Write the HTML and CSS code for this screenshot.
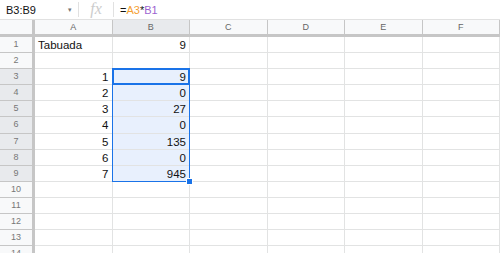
FILE: index.html
```html
<!DOCTYPE html>
<html lang="pt">
<head>
    <meta charset="UTF-8">
    <title>Tabuada - Planilha</title>
    <link rel="stylesheet" href="styles.css">
</head>
<body>

<div class="formula-bar">
    <div class="name-box">B3:B9 <span class="caret">▾</span></div>
    <div class="fx">fx</div>
    <div class="formula">=<span class="ref-a">A3</span>*<span class="ref-b">B1</span></div>
</div>

<div class="sheet">
    <div class="corner"></div>
    <div class="col-head">A</div>
    <div class="col-head selected">B</div>
    <div class="col-head">C</div>
    <div class="col-head">D</div>
    <div class="col-head">E</div>
    <div class="col-head">F</div>

    <div class="row-head">1</div>
    <div class="cell">Tabuada</div><div class="cell num">9</div><div class="cell"></div><div class="cell"></div><div class="cell"></div><div class="cell"></div>

    <div class="row-head">2</div>
    <div class="cell"></div><div class="cell"></div><div class="cell"></div><div class="cell"></div><div class="cell"></div><div class="cell"></div>

    <div class="row-head selected">3</div>
    <div class="cell num">1</div><div class="cell num">9</div><div class="cell"></div><div class="cell"></div><div class="cell"></div><div class="cell"></div>

    <div class="row-head selected">4</div>
    <div class="cell num">2</div><div class="cell num">0</div><div class="cell"></div><div class="cell"></div><div class="cell"></div><div class="cell"></div>

    <div class="row-head selected">5</div>
    <div class="cell num">3</div><div class="cell num">27</div><div class="cell"></div><div class="cell"></div><div class="cell"></div><div class="cell"></div>

    <div class="row-head selected">6</div>
    <div class="cell num">4</div><div class="cell num">0</div><div class="cell"></div><div class="cell"></div><div class="cell"></div><div class="cell"></div>

    <div class="row-head selected">7</div>
    <div class="cell num">5</div><div class="cell num">135</div><div class="cell"></div><div class="cell"></div><div class="cell"></div><div class="cell"></div>

    <div class="row-head selected">8</div>
    <div class="cell num">6</div><div class="cell num">0</div><div class="cell"></div><div class="cell"></div><div class="cell"></div><div class="cell"></div>

    <div class="row-head selected">9</div>
    <div class="cell num">7</div><div class="cell num">945</div><div class="cell"></div><div class="cell"></div><div class="cell"></div><div class="cell"></div>

    <div class="row-head">10</div>
    <div class="cell"></div><div class="cell"></div><div class="cell"></div><div class="cell"></div><div class="cell"></div><div class="cell"></div>

    <div class="row-head">11</div>
    <div class="cell"></div><div class="cell"></div><div class="cell"></div><div class="cell"></div><div class="cell"></div><div class="cell"></div>

    <div class="row-head">12</div>
    <div class="cell"></div><div class="cell"></div><div class="cell"></div><div class="cell"></div><div class="cell"></div><div class="cell"></div>

    <div class="row-head">13</div>
    <div class="cell"></div><div class="cell"></div><div class="cell"></div><div class="cell"></div><div class="cell"></div><div class="cell"></div>

    <div class="row-head">14</div>
    <div class="cell"></div><div class="cell"></div><div class="cell"></div><div class="cell"></div><div class="cell"></div><div class="cell"></div>

    <!-- selection B3:B9: fill under the text, outline over the grid lines -->
    <div class="selection-fill"></div>
    <div class="selection"><div class="fill-handle"></div></div>
    <div class="active-cell"></div>
</div>

</body>
</html>
```

FILE: styles.css
```css
body, html {
    margin: 0;
    padding: 0;
    height: 100%;
    overflow: hidden;
    background: white;
    font-family: "Liberation Sans", Arial, sans-serif;
    color: #111;
}

.formula-bar {
    display: flex;
    align-items: center;
    height: 19px;
    border-bottom: 1px solid #e1e1e1;
}

.name-box {
    width: 72px;
    padding-left: 6px;
    font-size: 11px;
    display: flex;
    justify-content: space-between;
    align-items: center;
    border-right: 1px solid #e1e1e1;
    height: 15px;
}

.caret {
    color: #777;
    font-size: 7px;
    margin-right: 6px;
}

.fx {
    width: 34px;
    height: 15px;
    text-align: center;
    font-family: "Liberation Serif", serif;
    font-style: italic;
    font-size: 16px;
    line-height: 14px;
    color: #cccccc;
    border-right: 1px solid #e1e1e1;
}

.formula {
    padding-left: 6px;
    font-size: 11px;
}

.ref-a {
    color: #f5a033;
}

.ref-b {
    color: #9b63d0;
}

.sheet {
    display: grid;
    grid-template-columns: 35px repeat(6, 77.5px);
    grid-template-rows: 17px repeat(14, 16.1px);
    position: relative;
    isolation: isolate;
}

.corner, .col-head, .row-head, .cell {
    box-sizing: border-box;
    border-right: 1px solid #e2e3e3;
    border-bottom: 1px solid #e2e3e3;
}

.corner {
    background: #f8f9fa;
    border-right: 3px solid #c6c6c6;
    border-bottom: 3px solid #c6c6c6;
}

.col-head {
    background: #f8f9fa;
    border-right-color: #c6c6c6;
    border-bottom: 3px solid #c6c6c6;
    color: #666;
    font-size: 9px;
    text-align: center;
    line-height: 15px;
}

.row-head {
    background: #f8f9fa;
    border-right: 3px solid #c6c6c6;
    border-bottom-color: #c6c6c6;
    color: #777;
    font-size: 9px;
    text-align: center;
    line-height: 15px;
}

.selected {
    background: #e8eaed;
}

.cell {
    font-size: 11.5px;
    line-height: 16px;
    padding: 0 3px;
    white-space: nowrap;
    overflow: hidden;
}

.num {
    text-align: right;
}

.selection-fill {
    grid-column: 3 / 4;
    grid-row: 4 / 11;
    position: absolute;
    inset: 0;
    z-index: -1;
    background: #e8f0fd;
}

.selection {
    grid-column: 3 / 4;
    grid-row: 4 / 11;
    position: absolute;
    top: -1px;
    left: -1px;
    right: 0;
    bottom: 0;
    border: 1px solid #1a73e8;
}

.active-cell {
    grid-column: 3 / 4;
    grid-row: 4 / 5;
    position: absolute;
    top: -1px;
    left: -1px;
    right: 0;
    bottom: 0;
    border: 2px solid #1a73e8;
}

.fill-handle {
    position: absolute;
    right: -4px;
    bottom: -4px;
    width: 5px;
    height: 5px;
    background: #1a73e8;
    border: 1px solid white;
}
```
